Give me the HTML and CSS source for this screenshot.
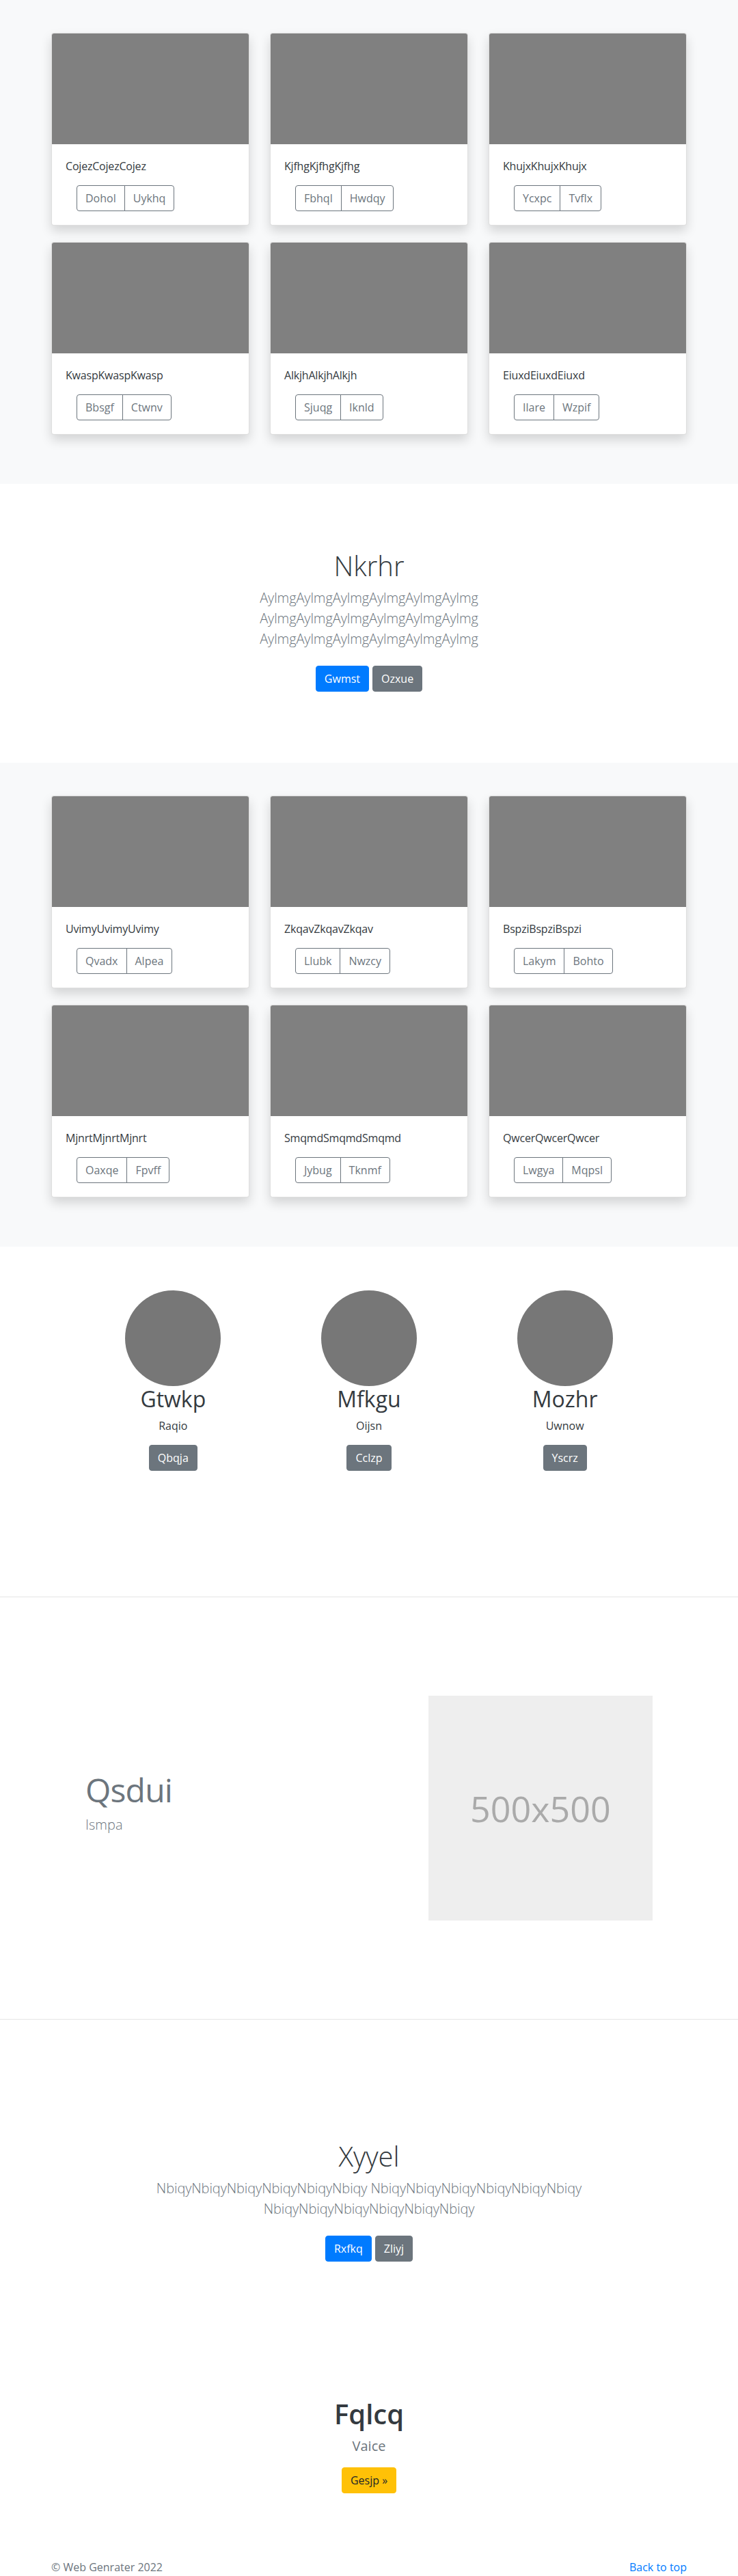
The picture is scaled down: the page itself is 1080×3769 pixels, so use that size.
FILE: index.html
```html
<!DOCTYPE html>
<html lang="en">
<head>
<meta charset="utf-8">
<title>Web Genrater</title>
<link rel="stylesheet" href="styles.css">
</head>
<body>

<section class="album">
  <div class="album-grid">
    <div class="card">
      <div class="card-img"></div>
      <div class="card-body">
        <p class="card-text">CojezCojezCojez</p>
        <div class="btn-group"><button class="btn-outline">Dohol</button><button class="btn-outline">Uykhq</button></div>
      </div>
    </div>
    <div class="card">
      <div class="card-img"></div>
      <div class="card-body">
        <p class="card-text">KjfhgKjfhgKjfhg</p>
        <div class="btn-group"><button class="btn-outline">Fbhql</button><button class="btn-outline">Hwdqy</button></div>
      </div>
    </div>
    <div class="card">
      <div class="card-img"></div>
      <div class="card-body">
        <p class="card-text">KhujxKhujxKhujx</p>
        <div class="btn-group"><button class="btn-outline">Ycxpc</button><button class="btn-outline">Tvflx</button></div>
      </div>
    </div>
    <div class="card">
      <div class="card-img"></div>
      <div class="card-body">
        <p class="card-text">KwaspKwaspKwasp</p>
        <div class="btn-group"><button class="btn-outline">Bbsgf</button><button class="btn-outline">Ctwnv</button></div>
      </div>
    </div>
    <div class="card">
      <div class="card-img"></div>
      <div class="card-body">
        <p class="card-text">AlkjhAlkjhAlkjh</p>
        <div class="btn-group"><button class="btn-outline">Sjuqg</button><button class="btn-outline">Iknld</button></div>
      </div>
    </div>
    <div class="card">
      <div class="card-img"></div>
      <div class="card-body">
        <p class="card-text">EiuxdEiuxdEiuxd</p>
        <div class="btn-group"><button class="btn-outline">Ilare</button><button class="btn-outline">Wzpif</button></div>
      </div>
    </div>
  </div>
</section>

<section class="jumbo">
  <div class="jumbo-inner">
    <h1 class="jumbo-heading">Nkrhr</h1>
    <p class="lead">AylmgAylmgAylmgAylmgAylmgAylmg AylmgAylmgAylmgAylmgAylmgAylmg AylmgAylmgAylmgAylmgAylmgAylmg</p>
    <div class="actions">
      <a class="btn btn-primary" href="#">Gwmst</a>
      <a class="btn btn-secondary" href="#">Ozxue</a>
    </div>
  </div>
</section>

<section class="album">
  <div class="album-grid">
    <div class="card">
      <div class="card-img"></div>
      <div class="card-body">
        <p class="card-text">UvimyUvimyUvimy</p>
        <div class="btn-group"><button class="btn-outline">Qvadx</button><button class="btn-outline">Alpea</button></div>
      </div>
    </div>
    <div class="card">
      <div class="card-img"></div>
      <div class="card-body">
        <p class="card-text">ZkqavZkqavZkqav</p>
        <div class="btn-group"><button class="btn-outline">Llubk</button><button class="btn-outline">Nwzcy</button></div>
      </div>
    </div>
    <div class="card">
      <div class="card-img"></div>
      <div class="card-body">
        <p class="card-text">BspziBspziBspzi</p>
        <div class="btn-group"><button class="btn-outline">Lakym</button><button class="btn-outline">Bohto</button></div>
      </div>
    </div>
    <div class="card">
      <div class="card-img"></div>
      <div class="card-body">
        <p class="card-text">MjnrtMjnrtMjnrt</p>
        <div class="btn-group"><button class="btn-outline">Oaxqe</button><button class="btn-outline">Fpvff</button></div>
      </div>
    </div>
    <div class="card">
      <div class="card-img"></div>
      <div class="card-body">
        <p class="card-text">SmqmdSmqmdSmqmd</p>
        <div class="btn-group"><button class="btn-outline">Jybug</button><button class="btn-outline">Tknmf</button></div>
      </div>
    </div>
    <div class="card">
      <div class="card-img"></div>
      <div class="card-body">
        <p class="card-text">QwcerQwcerQwcer</p>
        <div class="btn-group"><button class="btn-outline">Lwgya</button><button class="btn-outline">Mqpsl</button></div>
      </div>
    </div>
  </div>
</section>

<section class="team">
  <div class="team-grid">
    <div class="member">
      <div class="avatar"></div>
      <h2 class="member-name">Gtwkp</h2>
      <p class="member-role">Raqio</p>
      <div class="member-action"><a class="btn btn-secondary" href="#">Qbqja</a></div>
    </div>
    <div class="member">
      <div class="avatar"></div>
      <h2 class="member-name">Mfkgu</h2>
      <p class="member-role">Oijsn</p>
      <div class="member-action"><a class="btn btn-secondary" href="#">Cclzp</a></div>
    </div>
    <div class="member">
      <div class="avatar"></div>
      <h2 class="member-name">Mozhr</h2>
      <p class="member-role">Uwnow</p>
      <div class="member-action"><a class="btn btn-secondary" href="#">Yscrz</a></div>
    </div>
  </div>
</section>

<hr class="divider">

<section class="featurette">
  <div class="feat-row">
    <div class="feat-text">
      <h2 class="feat-heading">Qsdui</h2>
      <p class="feat-lead">Ismpa</p>
    </div>
    <div class="feat-media">
      <div class="placeholder">500x500</div>
    </div>
  </div>
</section>

<hr class="divider">

<section class="cta">
  <div class="cta-inner">
    <h1 class="jumbo-heading">Xyyel</h1>
    <p class="lead">NbiqyNbiqyNbiqyNbiqyNbiqyNbiqy NbiqyNbiqyNbiqyNbiqyNbiqyNbiqy NbiqyNbiqyNbiqyNbiqyNbiqyNbiqy</p>
    <div class="actions">
      <a class="btn btn-primary" href="#">Rxfkq</a>
      <a class="btn btn-secondary" href="#">Zliyj</a>
    </div>
  </div>
</section>

<section class="promo">
  <h1 class="promo-heading">Fqlcq</h1>
  <p class="promo-lead">Vaice</p>
  <div class="promo-action"><a class="btn btn-warning" href="#">Gesjp »</a></div>
</section>

<footer class="footer">
  <p class="copy">© Web Genrater 2022</p>
  <a class="top-link" href="#">Back to top</a>
</footer>

</body>
</html>
```

FILE: styles.css
```css
* {
  box-sizing: border-box;
}

html,
body {
  margin: 0;
  padding: 0;
}

body {
  font-family: "Open Sans", "Noto Sans", "Liberation Sans", sans-serif;
  font-size: 16px;
  line-height: 1.5;
  color: #212529;
  background: #fff;
}

p {
  margin: 0;
}

h1,
h2 {
  margin: 0;
}

a {
  text-decoration: none;
}

/* ---------- Album ---------- */
.album {
  background: #f8f9fa;
  padding: 48px 0;
}

.album-grid {
  width: 960px;
  margin: 0 auto;
  padding: 0 15px 24px;
  display: grid;
  grid-template-columns: repeat(3, 290px);
  column-gap: 30px;
  row-gap: 24px;
}

.card {
  background: #fff;
  border: 1px solid rgba(0, 0, 0, 0.125);
  border-radius: 4px;
  overflow: hidden;
  box-shadow: 0 8px 16px rgba(0, 0, 0, 0.15);
}

.card-img {
  height: 162px;
  background: #808080;
}

.card-body {
  padding: 20px;
}

.card-text {
  margin-bottom: 16px;
  line-height: 24px;
  color: #343a40;
  letter-spacing: -0.2px;
}

.btn-group {
  display: inline-flex;
  margin-left: 16px;
}

.btn-outline {
  font-family: inherit;
  font-size: 16px;
  line-height: 24px;
  padding: 6px 12px;
  color: #6c757d;
  background: transparent;
  border: 1px solid #6c757d;
  margin: 0;
}

.btn-outline:first-child {
  border-radius: 4px 0 0 4px;
}

.btn-outline + .btn-outline {
  margin-left: -1px;
  border-radius: 0 4px 4px 0;
}

/* ---------- Buttons ---------- */
.btn {
  display: inline-block;
  font-size: 16px;
  line-height: 24px;
  padding: 6px 12px;
  border: 1px solid transparent;
  border-radius: 4px;
  color: #fff;
}

.btn-primary {
  background: #007bff;
  border-color: #007bff;
}

.btn-secondary {
  background: #6c757d;
  border-color: #6c757d;
}

.btn-warning {
  background: #ffc107;
  border-color: #ffc107;
  color: #212529;
}

/* ---------- Jumbotron ---------- */
.jumbo {
  padding: 96px 0;
  text-align: center;
}

.jumbo-inner {
  max-width: 640px;
  margin: 0 auto;
  padding: 0 15px;
  text-align: center;
}

.jumbo-heading {
  font-size: 40px;
  font-weight: 300;
  line-height: 1.2;
  margin-bottom: 8px;
  color: #343a40;
}

.lead {
  font-size: 20px;
  font-weight: 300;
  line-height: 30px;
  color: #6c757d;
  margin-bottom: 16px;
  letter-spacing: -0.1px;
}

.actions {
  display: flex;
  justify-content: center;
  gap: 5px;
  padding: 8px 0;
}

/* ---------- Team ---------- */
.team {
  padding: 64px 0;
}

.team-grid {
  width: 860px;
  margin: 0 auto;
  display: grid;
  grid-template-columns: repeat(3, 1fr);
}

.member {
  text-align: center;
  margin-bottom: 24px;
  padding: 0 15px;
}

.avatar {
  width: 140px;
  height: 140px;
  margin: 0 auto;
  border-radius: 50%;
  background: #777;
}

.member-name {
  font-size: 32px;
  font-weight: 400;
  line-height: 1.2;
  margin-bottom: 8px;
  color: #343a40;
}

.member-role {
  line-height: 24px;
  margin-bottom: 16px;
  color: #343a40;
}

.member-action {
  display: flex;
  justify-content: center;
  margin-bottom: 16px;
}

/* ---------- Divider ---------- */
.divider {
  border: 0;
  border-top: 1px solid rgba(0, 0, 0, 0.1);
  margin: 80px 0;
  height: 0;
}

/* ---------- Featurette ---------- */
.featurette {
  padding: 64px 0;
}

.feat-row {
  width: 860px;
  margin: 0 auto;
  display: grid;
  grid-template-columns: 7fr 5fr;
  align-items: center;
}

.feat-text,
.feat-media {
  padding: 0 15px;
}

.feat-heading {
  font-size: 48px;
  font-weight: 400;
  line-height: 1.2;
  letter-spacing: -0.8px;
  color: #6c757d;
  margin-bottom: 8px;
}

.feat-lead {
  font-size: 20px;
  font-weight: 300;
  line-height: 30px;
  color: #6c757d;
  margin-bottom: 16px;
}

.placeholder {
  aspect-ratio: 1 / 1;
  background: #eee;
  color: #aaa;
  display: flex;
  align-items: center;
  justify-content: center;
  font-size: 52px;
}

/* ---------- CTA ---------- */
.cta {
  padding-top: 96px;
}

.cta-inner {
  max-width: 720px;
  margin: 0 auto;
  padding: 0 15px;
  text-align: center;
}

/* ---------- Promo ---------- */
.promo {
  padding: 191px 0 50px;
  text-align: center;
}

.promo-heading {
  font-size: 40px;
  font-weight: 600;
  line-height: 1.2;
  color: #343a40;
  margin-bottom: 8px;
}

.promo-lead {
  font-size: 20px;
  line-height: 30px;
  color: #6c757d;
  margin-bottom: 16px;
}

.promo-action {
  display: flex;
  justify-content: center;
}

/* ---------- Footer ---------- */
.footer {
  width: 960px;
  margin: 0 auto;
  padding: 46px 15px 0;
  display: flex;
  justify-content: space-between;
  line-height: 24px;
}

.copy {
  color: #6c757d;
}

.top-link {
  color: #007bff;
}
```
